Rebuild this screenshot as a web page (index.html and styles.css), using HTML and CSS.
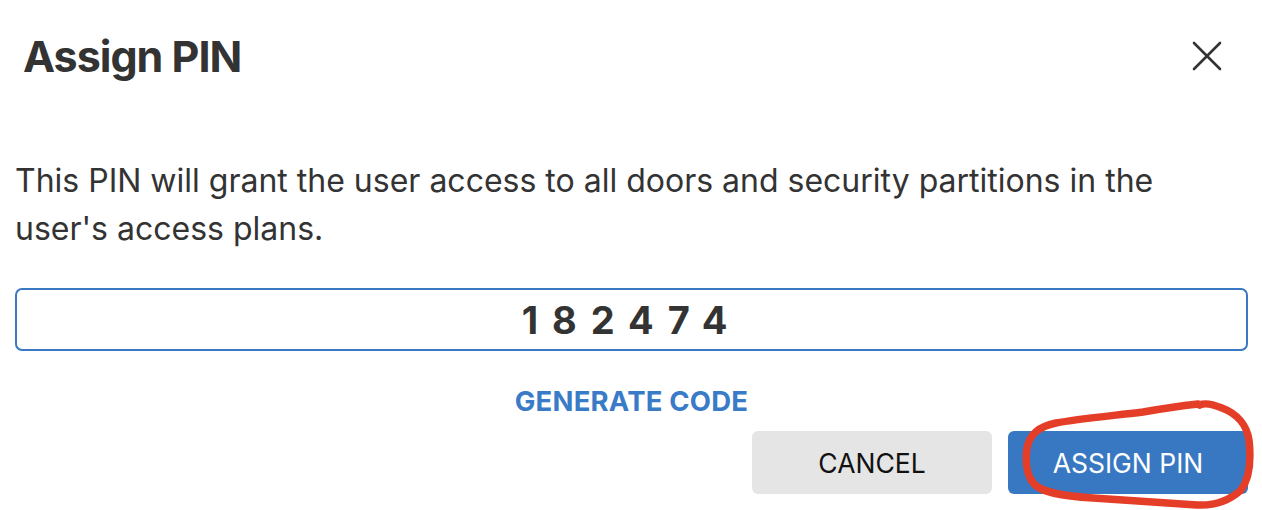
FILE: index.html
```html
<!DOCTYPE html>
<html lang="en">
<head>
  <meta charset="UTF-8" />
  <meta name="viewport" content="width=device-width, initial-scale=1" />
  <title>Assign PIN</title>
  <link rel="stylesheet" href="styles.css">
</head>
<body>
  <div class="dialog">
    <div class="dialog-header">
      <h2 class="dialog-title">Assign PIN</h2>
      <button type="button" class="close-btn" aria-label="Close">
        <svg width="30" height="30" viewBox="0 0 30 30">
          <path d="M2 2 L28 28 M28 2 L2 28" stroke="#333" stroke-width="2.6" stroke-linecap="round" fill="none" />
        </svg>
      </button>
    </div>

    <p class="dialog-text">This PIN will grant the user access to all doors and security partitions in the user's access plans.</p>

    <input type="text" class="pin-input" id="pin" value="182474" readonly />

    <div class="generate-row">
      <button type="button" class="link-btn" onclick="generateCode()">GENERATE CODE</button>
    </div>

    <div class="dialog-actions">
      <button type="button" class="btn btn-cancel">CANCEL</button>
      <button type="button" class="btn btn-primary">ASSIGN PIN</button>
    </div>
  </div>

  <!-- hand drawn marker around the primary button -->
  <svg class="scribble" width="1262" height="510" viewBox="0 0 1262 510">
    <path d="M1198 404 C1180 406 1160 409 1143 412 C1110 416 1077 419 1056 423 C1038 427 1030 434 1027 448 C1025 462 1027 476 1034 484 C1042 492 1060 496 1093 498 C1120 500 1150 502 1197 505 C1215 506 1230 500 1241 490 C1250 478 1251 458 1249 440 C1247 426 1238 414 1222 408 C1212 404 1204 403 1200 405"
      stroke="#e43e28" stroke-width="7.5" stroke-linecap="round" stroke-linejoin="round" fill="none" />
  </svg>

<script>
  function generateCode() {
    const pin = document.getElementById("pin");
    let code = "";
    for (let i = 0; i < 6; i++) {
      code += Math.floor(Math.random() * 10);
    }
    pin.value = code;
  }
</script>
</body>
</html>
```

FILE: styles.css
```css
body {
  margin: 0;
  background: #fff;
  font-family: Inter, 'Noto Sans', sans-serif;
  color: #333;
}

.dialog {
  padding: 29px 14px 0 15px;
}

.dialog-header {
  display: flex;
  justify-content: space-between;
  align-items: center;
}

.dialog-title {
  margin: 0 0 0 8px;
  font-size: 43px;
  line-height: 54px;
  font-weight: 700;
  letter-spacing: -1px;
  color: #333;
}

.close-btn {
  background: none;
  border: none;
  padding: 0;
  margin-right: 26px;
  width: 30px;
  height: 30px;
  cursor: pointer;
}

.close-btn svg {
  display: block;
}

.dialog-text {
  margin: 74px 0 0;
  font-size: 32px;
  line-height: 48px;
  color: #333;
  max-width: 1180px;
}

.pin-input {
  display: block;
  box-sizing: border-box;
  width: 100%;
  height: 63px;
  margin-top: 35px;
  border: 2px solid #3a78c4;
  border-radius: 7px;
  text-align: center;
  font-family: Inter, 'Noto Sans', sans-serif;
  font-size: 38px;
  font-weight: 700;
  letter-spacing: 14px;
  color: #333;
  outline: none;
}

.generate-row {
  display: flex;
  justify-content: center;
  margin-top: 34px;
}

.link-btn {
  background: none;
  border: none;
  padding: 0;
  font-family: Inter, 'Noto Sans', sans-serif;
  font-size: 27.5px;
  line-height: 32px;
  font-weight: 700;
  letter-spacing: 0.2px;
  color: #3a7bc8;
  cursor: pointer;
}

.dialog-actions {
  display: flex;
  justify-content: flex-end;
  gap: 16px;
  margin-top: 14px;
}

.btn {
  width: 240px;
  height: 63px;
  border: none;
  border-radius: 6px;
  font-family: Inter, 'Noto Sans', sans-serif;
  font-size: 26.5px;
  cursor: pointer;
}

.btn-cancel {
  background: #e5e5e5;
  color: #111;
}

.btn-primary {
  background: #3878c2;
  color: #fff;
}

.scribble {
  position: absolute;
  left: 0;
  top: 0;
  pointer-events: none;
}
```
